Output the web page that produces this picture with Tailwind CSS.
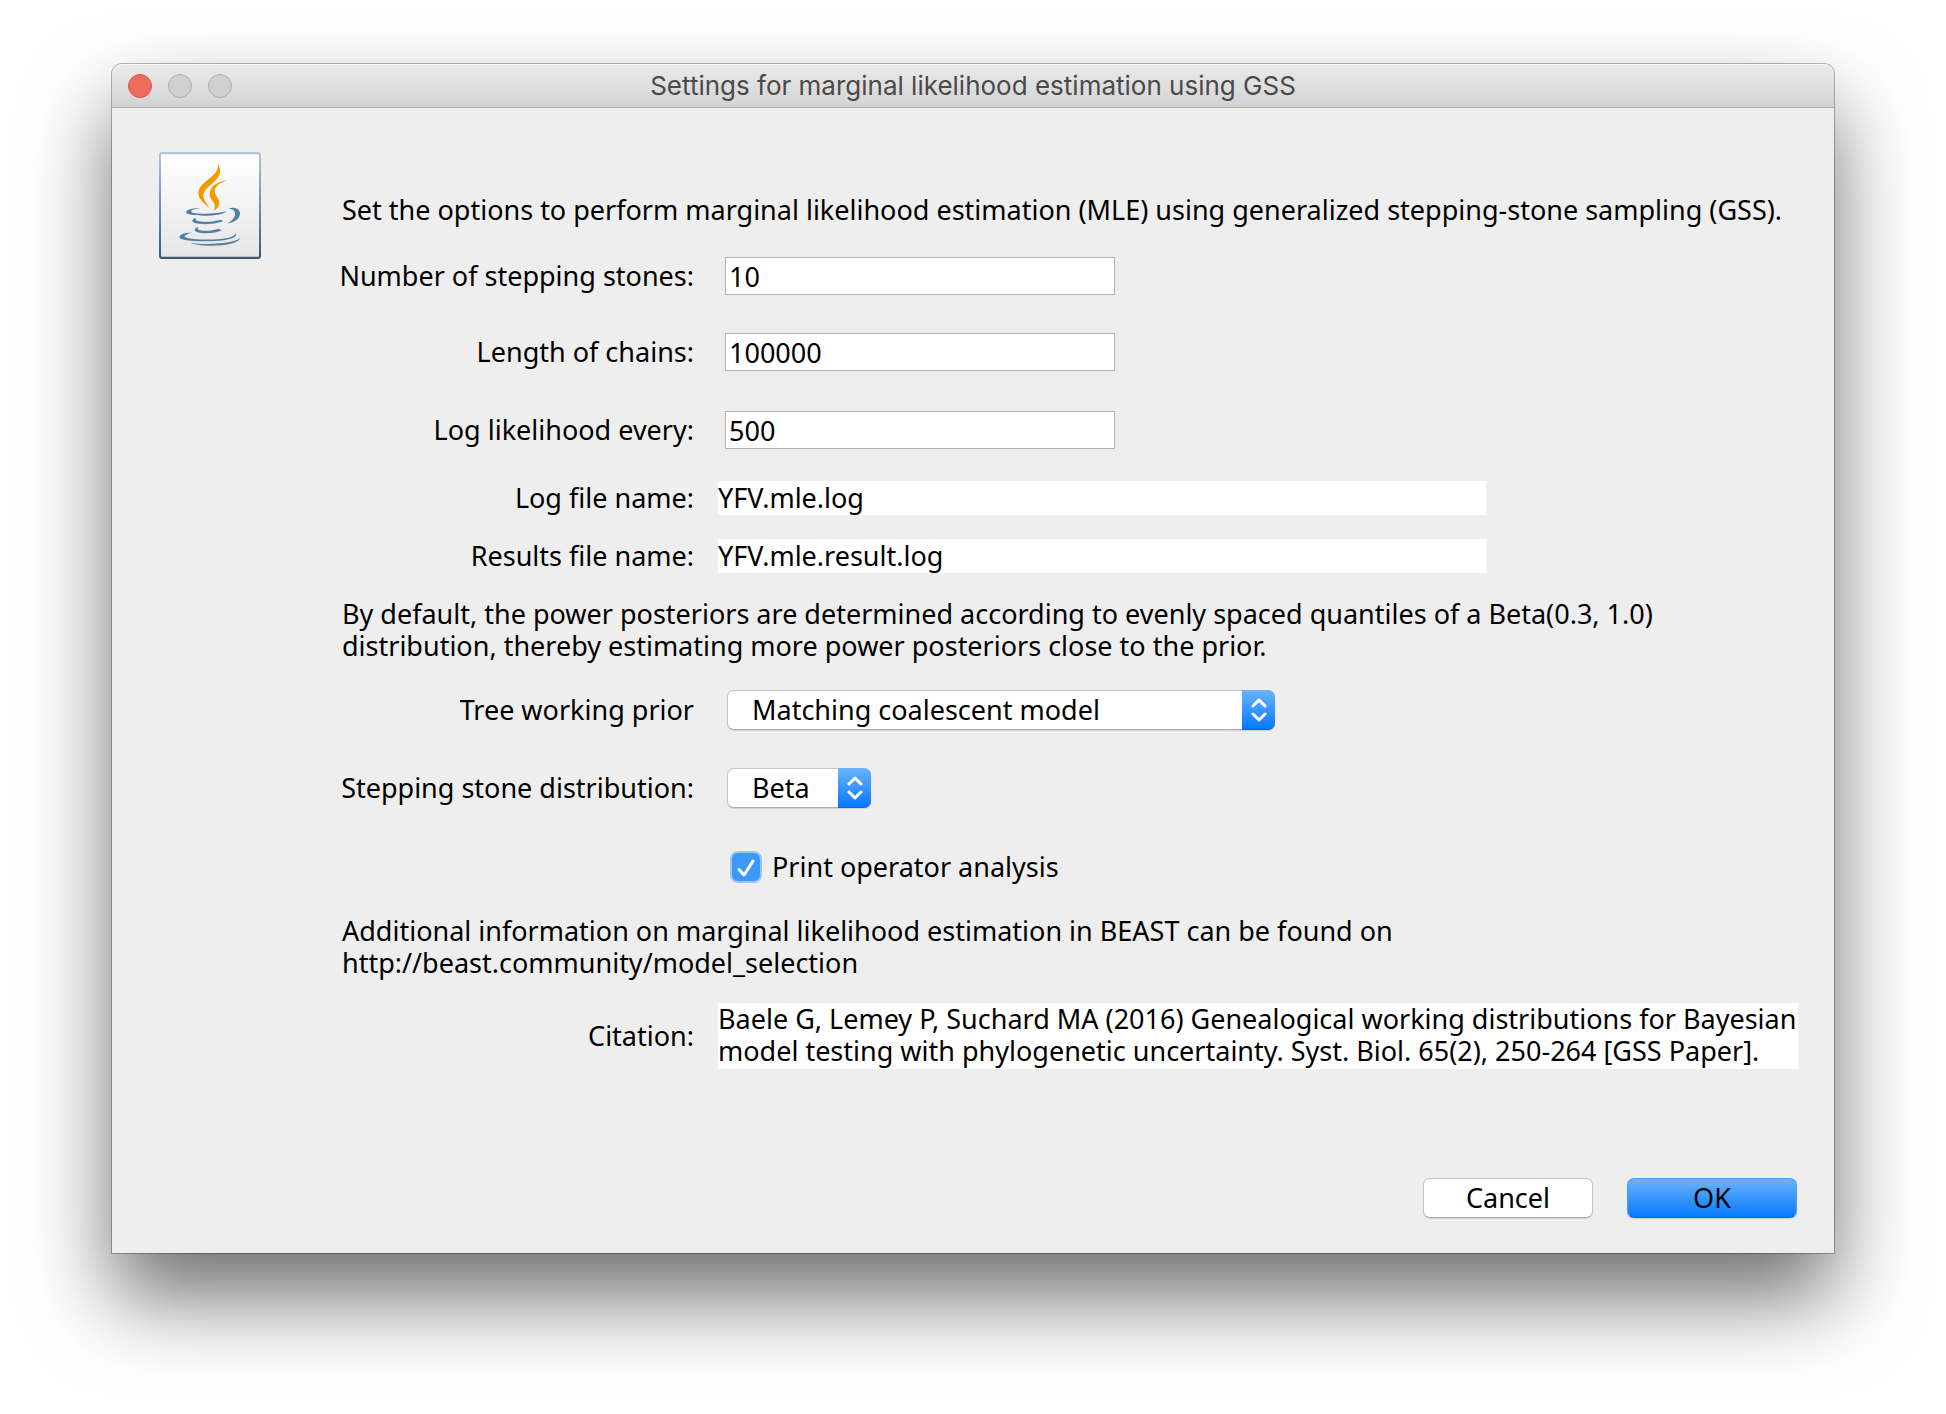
<!DOCTYPE html>
<html lang="en">
<head>
<meta charset="utf-8">
<title>Settings for marginal likelihood estimation using GSS</title>
<script src="https://cdn.jsdelivr.net/npm/@tailwindcss/browser@4"></script>
</head>
<body class="bg-white overflow-x-hidden px-28 pt-16 pb-40 font-['Noto_Sans',sans-serif] text-[27px] leading-8 text-black">
<main class="rounded-t-[10px] bg-[#eeeeee] shadow-[0_0_0_1px_rgba(0,0,0,0.28),0_45px_84px_rgba(0,0,0,0.56)]">

  <!-- Title bar -->
  <header class="flex h-11 items-center rounded-t-[10px] border-b border-[#b1b1b1] bg-linear-to-b/srgb from-[#ebebeb] to-[#d3d3d3] px-4 shadow-[inset_0_1px_0_#f6f6f6]">
    <div class="flex flex-1 gap-4">
      <button aria-label="Close" class="size-6 rounded-full border border-[#d9544c] bg-[#ee6b60]"></button>
      <button aria-label="Minimize" class="size-6 rounded-full border border-[#b0b0b0] bg-[#d0d0d0]"></button>
      <button aria-label="Zoom" class="size-6 rounded-full border border-[#b0b0b0] bg-[#d0d0d0]"></button>
    </div>
    <h1 class="whitespace-nowrap font-['Inter',sans-serif] text-[26px] text-[#4a4a4a]">Settings for marginal likelihood estimation using GSS</h1>
    <div class="flex-1"></div>
  </header>

  <div class="flex items-start pt-11 pr-9 pl-[47px]">
    <svg class="h-[107px] w-[102px] shrink-0" viewBox="176 307 306 321" aria-hidden="true">
      <defs>
        <linearGradient id="frame" x1="0" y1="0" x2="0" y2="1"><stop offset="0" stop-color="#b3c5dc"/><stop offset="1" stop-color="#3d5670"/></linearGradient>
        <linearGradient id="paper" x1="0" y1="0" x2="0" y2="1"><stop offset="0" stop-color="#ffffff"/><stop offset="1" stop-color="#e6e6e6"/></linearGradient>
      </defs>
      <rect x="176" y="307" width="306" height="321" rx="9" fill="url(#frame)"/>
      <rect x="182" y="314" width="294" height="307" rx="3" fill="url(#paper)"/>
      <g fill="#f39a00">
        <path d="M353 342C364 361 361 378 344 394C323 413 308 424 309 440C311 454 321 464 328 476C309 459 294 447 294 430C294 407 321 394 339 376C350 365 354 356 353 342Z"/>
        <path d="M383 391C360 399 344 409 343 424C343 438 357 444 357 459C357 471 349 478 340 483C344 474 345 467 341 460C336 451 328 445 328 433C328 411 350 396 383 391Z"/>
      </g>
      <g fill="#5382a1">
        <path d="M299 475C280 478 270 483 273 487C281 494 341 494 380 485C372 492 355 497 324 498C286 499 257 495 257 488C258 480 276 475 299 475Z"/>
        <path d="M385 477C401 470 420 477 419 492C418 508 402 518 381 521C396 513 405 504 404 491C403 481 396 478 385 477Z"/>
        <path d="M288 505C283 512 288 515 307 516C327 517 346 514 361 510L369 515C352 521 333 524 312 524C286 523 274 518 276 512C278 508 282 506 288 505Z"/>
        <path d="M294 532C289 539 294 542 309 543C327 544 342 541 354 537L365 542C353 548 337 551 318 551C292 551 280 545 284 538C286 535 290 533 294 532Z"/>
        <path d="M274 549C258 553 250 559 254 562C263 569 314 571 350 569C383 567 403 561 406 551C412 560 399 567 376 571C340 577 237 578 237 563C237 554 254 548 274 549Z"/>
        <path d="M419 564C416 580 377 588 332 588C304 588 281 585 271 579C292 583 324 584 355 581C389 578 413 573 419 564Z"/>
      </g>
    </svg>

    <form id="settings" class="ml-[81px] flex min-w-0 flex-1 flex-col pt-[42px]">
      <p class="whitespace-nowrap">Set the options to perform marginal likelihood estimation (MLE) using generalized stepping-stone sampling (GSS).</p>

      <div class="mt-[31px] grid grid-cols-[352px_1fr] items-center gap-x-[31px]">
        <label for="stones" class="justify-self-end whitespace-nowrap">Number of stepping stones:</label>
        <input id="stones" type="text" value="10" class="h-[38px] w-[390px] border border-[#b3b3b3] bg-white px-[3px] outline-none">
      </div>
      <div class="mt-[38px] grid grid-cols-[352px_1fr] items-center gap-x-[31px]">
        <label for="chains" class="justify-self-end whitespace-nowrap">Length of chains:</label>
        <input id="chains" type="text" value="100000" class="h-[38px] w-[390px] border border-[#b3b3b3] bg-white px-[3px] outline-none">
      </div>
      <div class="mt-10 grid grid-cols-[352px_1fr] items-center gap-x-[31px]">
        <label for="every" class="justify-self-end whitespace-nowrap">Log likelihood every:</label>
        <input id="every" type="text" value="500" class="h-[38px] w-[390px] border border-[#b3b3b3] bg-white px-[3px] outline-none">
      </div>
      <div class="mt-8 grid grid-cols-[352px_1fr] items-center gap-x-6">
        <label for="logfile" class="justify-self-end whitespace-nowrap">Log file name:</label>
        <input id="logfile" type="text" value="YFV.mle.log" class="h-[34px] w-[768px] bg-white leading-[34px] outline-none">
      </div>
      <div class="mt-6 grid grid-cols-[352px_1fr] items-center gap-x-6">
        <label for="resultfile" class="justify-self-end whitespace-nowrap">Results file name:</label>
        <input id="resultfile" type="text" value="YFV.mle.result.log" class="h-[34px] w-[768px] bg-white leading-[34px] outline-none">
      </div>

      <p class="mt-[25px] whitespace-nowrap">By default, the power posteriors are determined according to evenly spaced quantiles of a Beta(0.3, 1.0)<br>distribution, thereby estimating more power posteriors close to the prior.</p>

      <div class="mt-7 grid grid-cols-[352px_1fr] items-center gap-x-[33px]">
        <label for="prior" class="justify-self-end whitespace-nowrap">Tree working prior</label>
        <div class="relative h-10 w-[548px]">
          <select id="prior" class="size-full appearance-none rounded-[7px] border border-[#c6c6c6] border-b-[#adadad] bg-white pl-6 leading-[38px] shadow-[0_1px_1px_rgba(0,0,0,0.12)] outline-none"><option>Matching coalescent model</option></select>
          <span class="pointer-events-none absolute inset-y-0 right-0 flex w-[33px] items-center justify-center rounded-r-[7px] border-b border-[#0a60ff] bg-linear-to-b/srgb from-[#6cb3fa] to-[#067aff]">
            <svg class="h-6 w-4" viewBox="0 0 16 24" fill="none" stroke="#fff" stroke-width="3" stroke-linecap="round" stroke-linejoin="round"><path d="M2 8L8 2L14 8M2 16L8 22L14 16"/></svg>
          </span>
        </div>
      </div>
      <div class="mt-[38px] grid grid-cols-[352px_1fr] items-center gap-x-[33px]">
        <label for="distribution" class="justify-self-end whitespace-nowrap">Stepping stone distribution:</label>
        <div class="relative h-10 w-36">
          <select id="distribution" class="size-full appearance-none rounded-[7px] border border-[#c6c6c6] border-b-[#adadad] bg-white pl-6 leading-[38px] shadow-[0_1px_1px_rgba(0,0,0,0.12)] outline-none"><option>Beta</option></select>
          <span class="pointer-events-none absolute inset-y-0 right-0 flex w-[33px] items-center justify-center rounded-r-[7px] border-b border-[#0a60ff] bg-linear-to-b/srgb from-[#6cb3fa] to-[#067aff]">
            <svg class="h-6 w-4" viewBox="0 0 16 24" fill="none" stroke="#fff" stroke-width="3" stroke-linecap="round" stroke-linejoin="round"><path d="M2 8L8 2L14 8M2 16L8 22L14 16"/></svg>
          </span>
        </div>
      </div>

      <div class="mt-[43px] flex items-center gap-2.5 pl-[388px]">
        <span class="relative size-8">
          <input id="operators" type="checkbox" checked class="block size-8 appearance-none rounded-lg border-2 border-[#98c5f5] bg-[#3b99fc]">
          <svg class="pointer-events-none absolute inset-0 size-8" viewBox="0 0 32 32" fill="none" stroke="#fff" stroke-width="3" stroke-linecap="round" stroke-linejoin="round"><path d="M9 18.5L14 24L23 10"/></svg>
        </span>
        <label for="operators">Print operator analysis</label>
      </div>

      <p class="mt-8 whitespace-nowrap">Additional information on marginal likelihood estimation in BEAST can be found on<br>http://beast.community/model_selection</p>

      <div class="mt-6 grid grid-cols-[352px_1fr] items-center gap-x-6">
        <label for="citation" class="justify-self-end whitespace-nowrap">Citation:</label>
        <textarea id="citation" rows="2" readonly class="block h-[66px] w-full resize-none overflow-hidden whitespace-pre bg-white outline-none">Baele G, Lemey P, Suchard MA (2016) Genealogical working distributions for Bayesian
model testing with phylogenetic uncertainty. Syst. Biol. 65(2), 250-264 [GSS Paper].</textarea>
      </div>
    </form>
  </div>

  <footer class="flex justify-end gap-[34px] pt-[109px] pr-[37px] pb-[35px]">
    <button type="button" class="h-10 w-[170px] rounded-[7px] border border-[#c6c6c6] border-b-[#adadad] bg-white shadow-[0_1px_1px_rgba(0,0,0,0.12)]">Cancel</button>
    <button type="submit" form="settings" class="h-10 w-[170px] rounded-[7px] border border-[#4a9df8] border-b-[#0a60ff] bg-linear-to-b/srgb from-[#6cb3fa] to-[#067aff] shadow-[0_1px_1px_rgba(0,0,0,0.12)]">OK</button>
  </footer>
</main>
</body>
</html>
